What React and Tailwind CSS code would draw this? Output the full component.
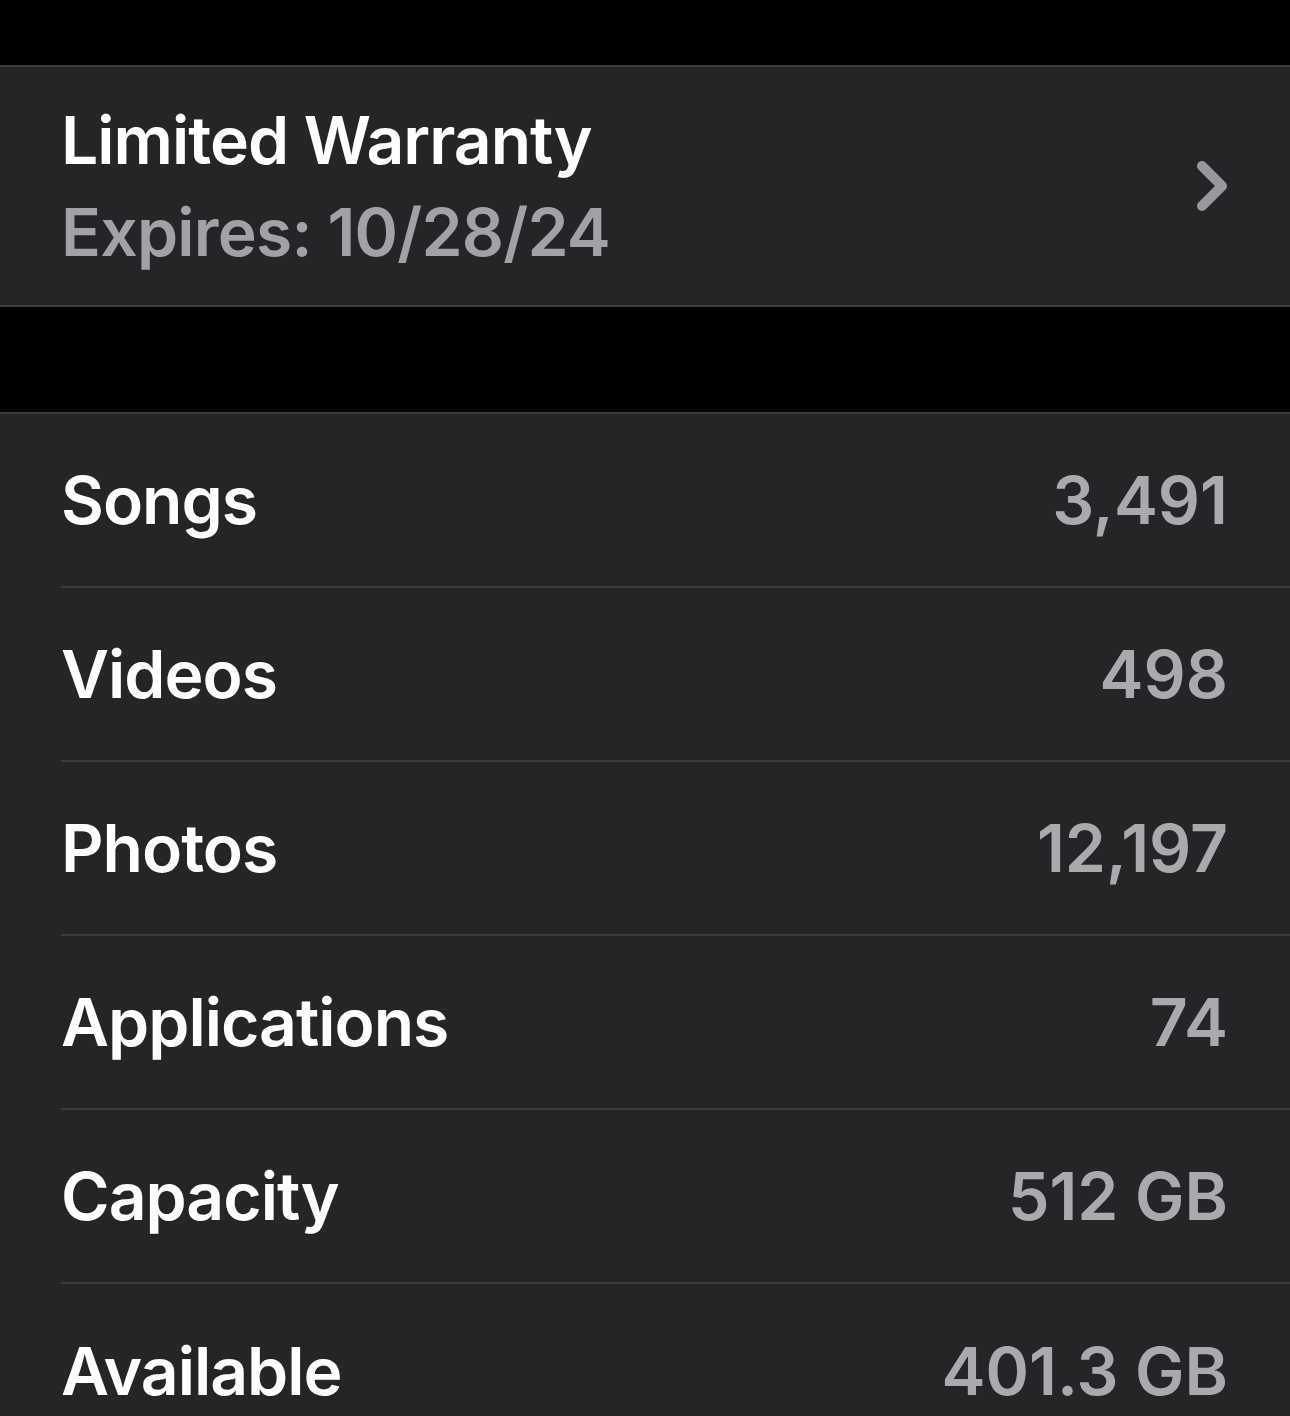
import React from 'react';

const rows = [
  { label: 'Songs', value: '3,491' },
  { label: 'Videos', value: '498' },
  { label: 'Photos', value: '12,197' },
  { label: 'Applications', value: '74' },
  { label: 'Capacity', value: '512 GB' },
  { label: 'Available', value: '401.3 GB' },
];

const Chevron = () => (
  <svg width="40" height="56" viewBox="0 0 40 56" fill="none">
    <path d="M10 8 L30 28 L10 48" stroke="#98989e" strokeWidth="10" strokeLinecap="round" strokeLinejoin="round" />
  </svg>
);

const App = () => {
  return (
    <div
      className="w-[1290px] h-[1416px] overflow-hidden bg-black"
      style={{ fontFamily: 'Inter, "Noto Sans", sans-serif' }}
    >
      <div className="h-[65px]" />

      {/* Warranty card */}
      <div className="border-y-2 border-[#3c3c3f] bg-[#252527]">
        <div className="h-[238px] flex items-center justify-between pl-[61px] pr-[58px]">
          <div className="flex flex-col">
            <span className="text-[66px] leading-[92px] font-semibold text-white tracking-[-1px]">
              Limited Warranty
            </span>
            <span className="text-[66px] leading-[92px] font-semibold text-[#a1a1a6] tracking-[-0.8px]">
              Expires: 10/28/24
            </span>
          </div>
          <Chevron />
        </div>
      </div>

      <div className="h-[105px]" />

      {/* Stats card */}
      <div className="border-t-2 border-[#3c3c3f] bg-[#252527]">
        {rows.map((row, i) => (
          <div key={row.label} className="pl-[61px]">
            <div
              className={`h-[174px] flex items-center justify-between pr-[62px] ${
                i < rows.length - 1 ? 'border-b-2 border-[#3c3c3f]' : ''
              }`}
            >
              <span className="text-[66px] font-semibold text-white tracking-[-1px]">{row.label}</span>
              <span className="text-[66px] font-semibold text-[#a9a9ae] tracking-[0px]">{row.value}</span>
            </div>
          </div>
        ))}
      </div>
    </div>
  );
};

export default App;
